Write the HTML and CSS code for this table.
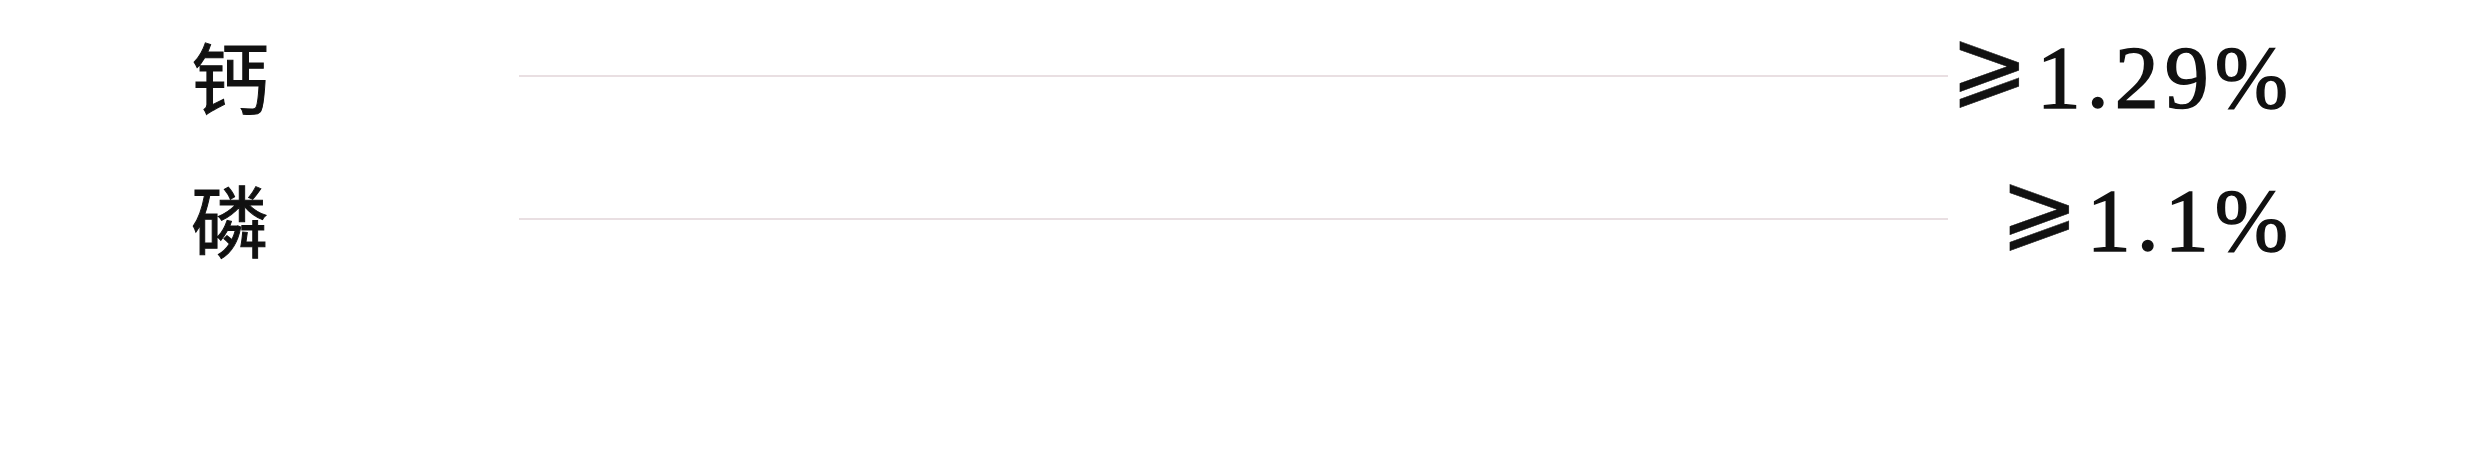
FILE: index.html
```html
<!DOCTYPE html>
<html>
  <head>
    <meta charset="UTF-8">
    <title>钙 磷</title>
    <link rel="stylesheet" href="styles.css">
  </head>
  <body>
    <div class="spec-list">
      <div class="spec-row">
        <span class="spec-name">钙</span>
        <span class="spec-line"></span>
        <span class="spec-value"><span class="ge">⩾</span>1.29%</span>
      </div>
      <div class="spec-row">
        <span class="spec-name">磷</span>
        <span class="spec-line"></span>
        <span class="spec-value"><span class="ge">⩾</span>1.1%</span>
      </div>
    </div>
  </body>
</html>
```

FILE: styles.css
```css
body {
    margin: 0;
    background: #fff;
    color: #111;
    font-family: "Liberation Serif", "Noto Sans CJK SC", serif;
}

.spec-list {
    padding: 7px 186px 0 191px;
}

.spec-row {
    display: flex;
    align-items: center;
    height: 143px;
}

.spec-name {
    width: 328px;
    margin-top: -8px;
    font-family: "Noto Sans CJK SC", sans-serif;
    font-size: 78px;
    line-height: 1;
    -webkit-text-stroke: 1px #111;
}

.spec-line {
    flex: 1;
    height: 2px;
    margin-top: -6px;
    background: #e9dfe2;
}

.spec-value {
    width: 346px;
    margin-top: -18px;
    text-align: right;
    font-size: 88px;
    letter-spacing: 6px;
    line-height: 1;
    white-space: nowrap;
    -webkit-text-stroke: 1.5px #111;
}

.spec-value .ge {
    font-family: "DejaVu Serif", serif;
    font-size: 94px;
    letter-spacing: 8px;
    vertical-align: 0.12em;
    -webkit-text-stroke: 0.5px #111;
}
```
